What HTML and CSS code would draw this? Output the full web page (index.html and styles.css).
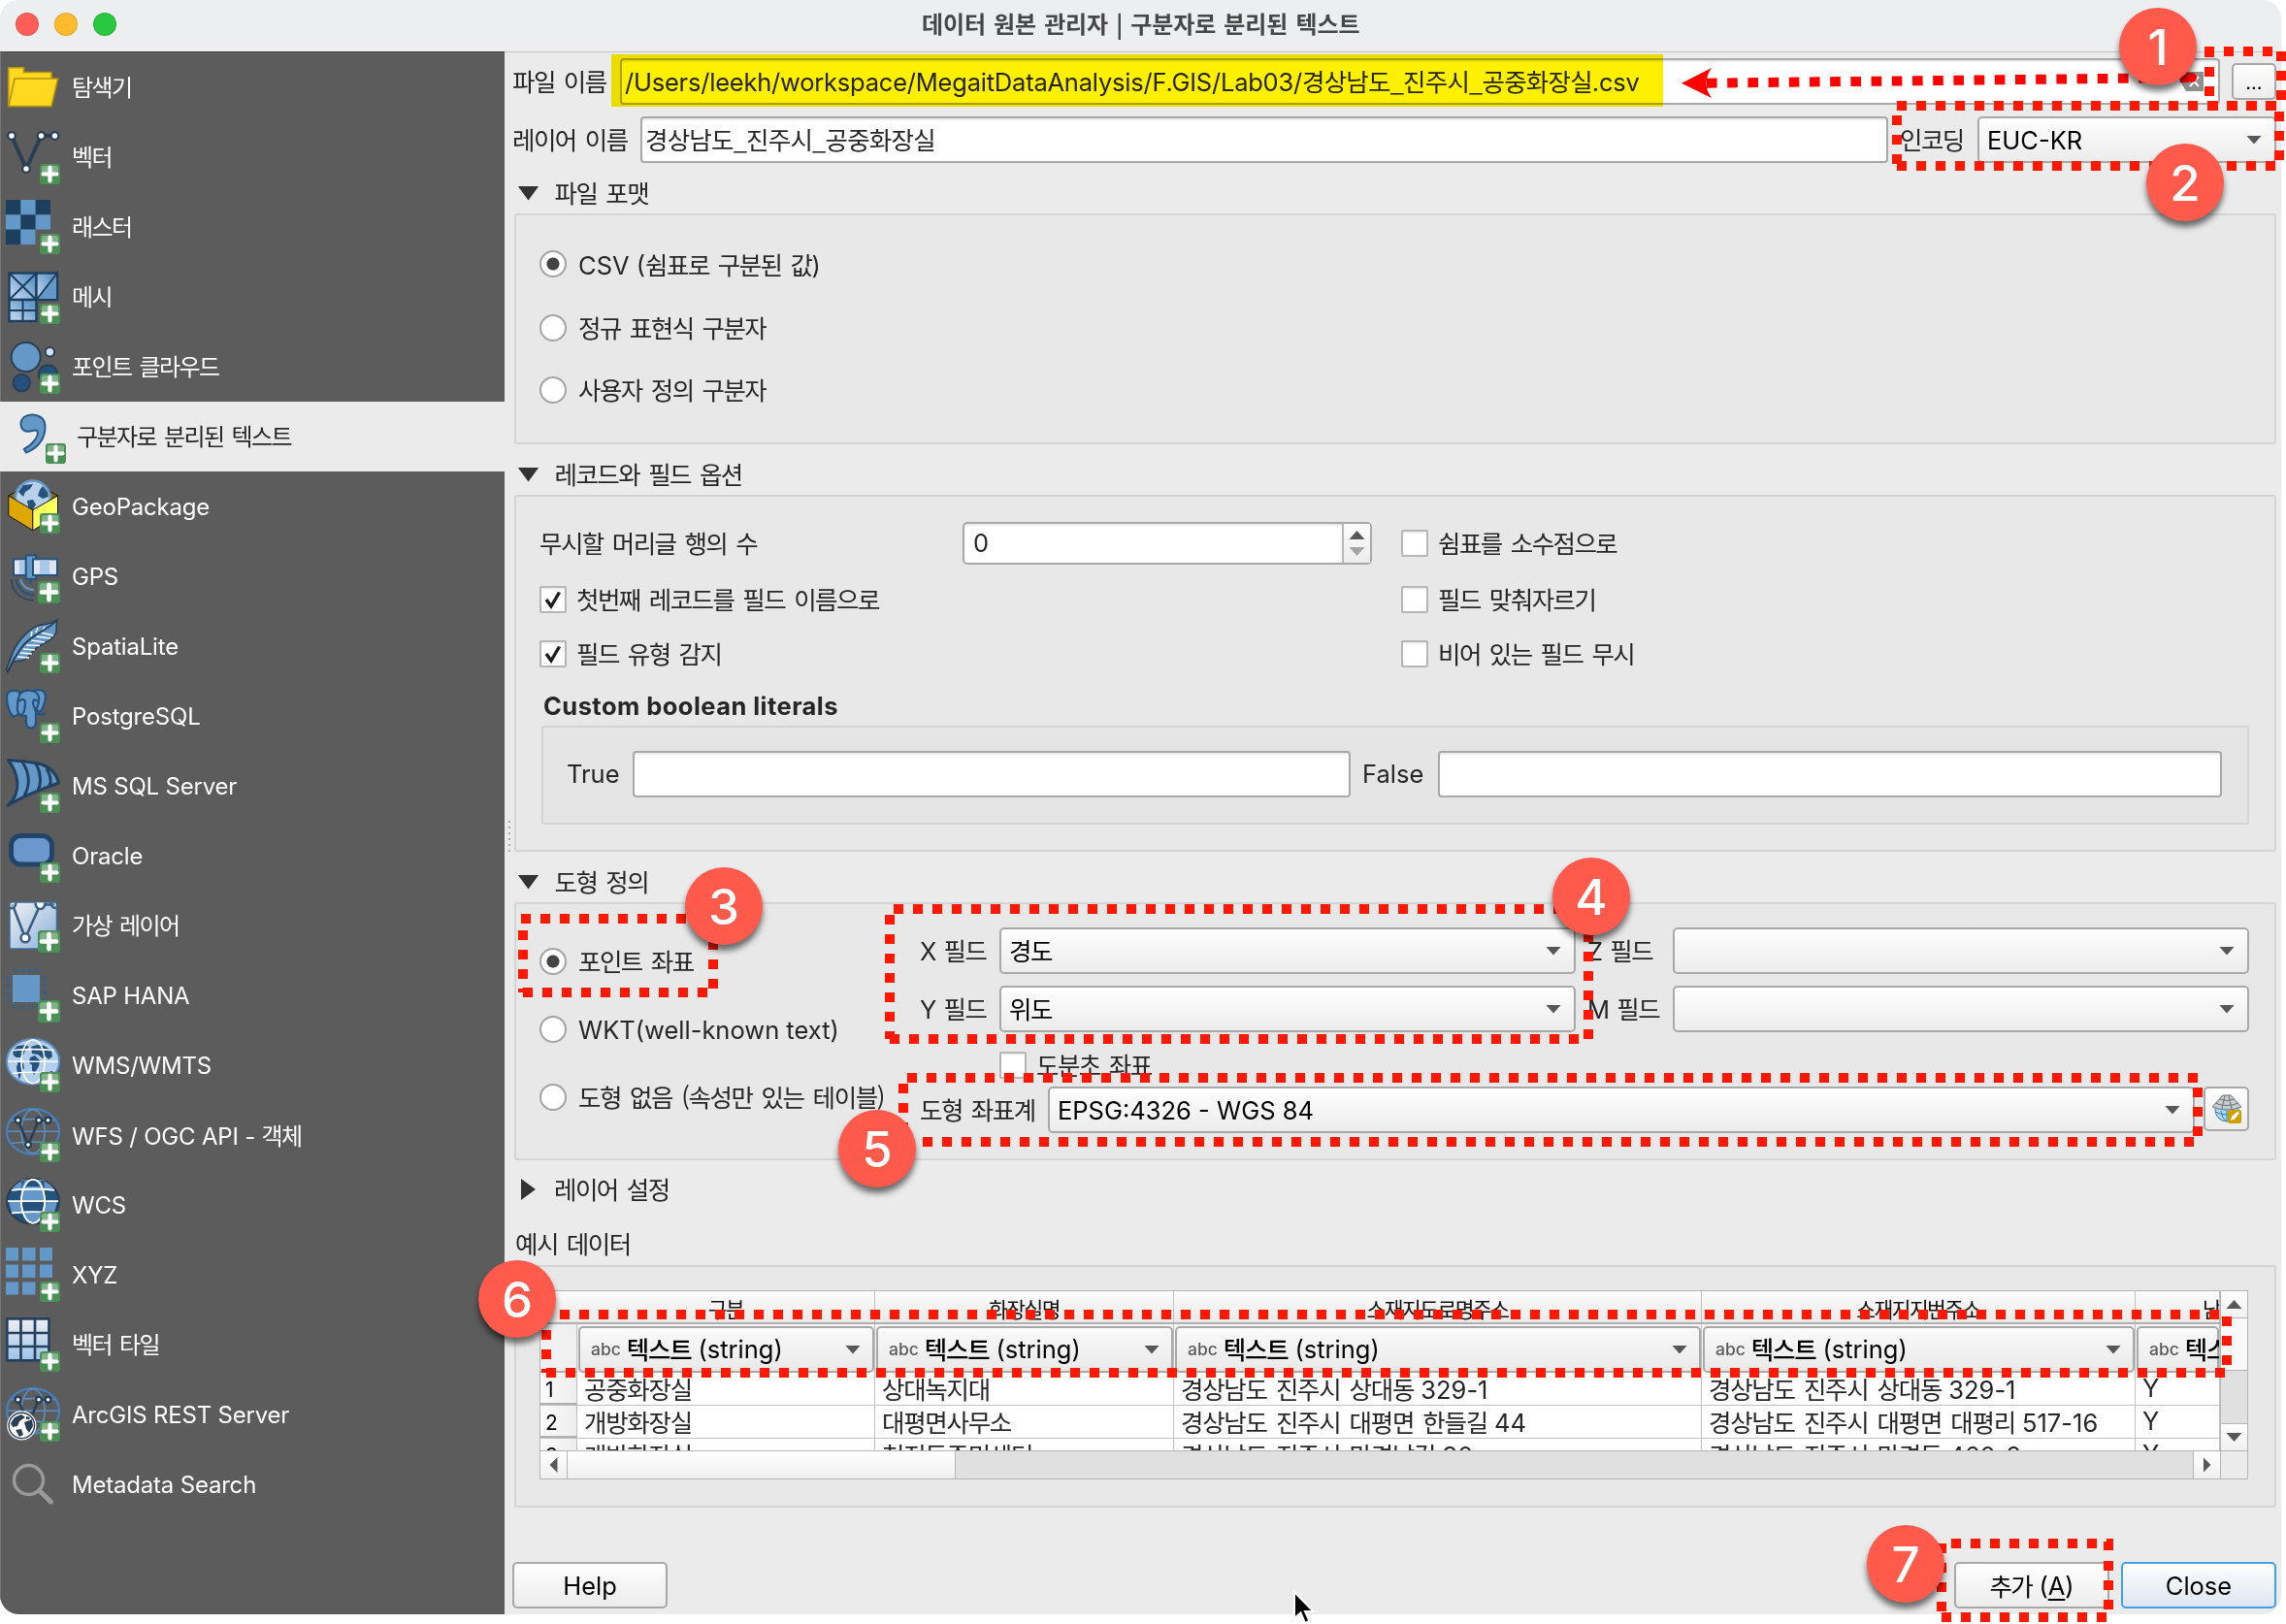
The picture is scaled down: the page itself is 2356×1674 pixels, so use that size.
FILE: index.html
```html
<!DOCTYPE html>
<html lang="ko">
<head>
<meta charset="utf-8">
<title>데이터 원본 관리자</title>
<link rel="stylesheet" href="styles.css">
</head>
<body>
<svg class="defs" width="0" height="0">
  <defs>
    <linearGradient id="pale" x1="0" y1="0" x2="1" y2="1"><stop offset="0" stop-color="#f2f2f4"/><stop offset="1" stop-color="#86aedb"/></linearGradient>
    <linearGradient id="mesh" x1="0" y1="1" x2="1" y2="0"><stop offset="0.2" stop-color="#b4cfeb"/><stop offset="0.8" stop-color="#6398c8"/></linearGradient>
    <linearGradient id="tile" x1="0" y1="0" x2="0" y2="1"><stop offset="0" stop-color="#f0f0f2"/><stop offset="1" stop-color="#9cc2ea"/></linearGradient>
    <symbol id="plus" viewBox="0 0 21 21"><rect width="21" height="21" rx="3" fill="#4a8f55"/><path d="M2 10V4Q2 2 4 2H17Q19 2 19 4V10Z" fill="#83b18b"/><path d="M10.5 3.5V17.5M3.5 10.5H17.5" stroke="#fff" stroke-width="4.2" stroke-linecap="round"/></symbol>
    <symbol id="land" viewBox="0 0 56 49"><path d="M7 13L12 8 20 7 24 9 20 13 18 17 15 20 11 20 8 18ZM13 24L18 26 19 31 16 36 14 43 12 36 11 30ZM26 9L32 7 40 8 47 13 48 19 44 22 41 19 38 21 33 17 27 16ZM25 20L30 18 35 23 34 29 31 34 29 38 27 33 27 28 24 25ZM44 35L48 34 49 37 45 39Z"/></symbol>
    <symbol id="grid" viewBox="0 0 56 49"><g fill="none" stroke-width="1.6"><ellipse cx="28" cy="24.3" rx="12" ry="22.5"/><path d="M2 24.3H54M6 12.8Q28 10.5 50 12.8M6 36.5Q28 34 50 36.5"/></g></symbol>
  </defs>
</svg>

<div class="window">
  <header class="titlebar">
    <div class="lights"><i class="light red"></i><i class="light amber"></i><i class="light green"></i></div>
    <h1 class="title ko">데이터 원본 관리자 | 구분자로 분리된 텍스트</h1>
  </header>

  <div class="body">
    <nav class="sidebar">
      <a class="source"><svg class="icon" viewBox="0 0 56 56"><g fill="#ffd820" stroke="#b5930e" stroke-width="1.6"><path d="M2.7 7.8H18.5V12.5H47V47.5H2.7Z"/><path d="M9 19H53.7L47 47.5H3Z"/></g></svg><span class="ko">탐색기</span></a>
      <a class="source"><svg class="icon" viewBox="0 0 56 56"><path d="M6 6L21 40 36.5 6H50.5" fill="none" stroke="#2a3e54" stroke-width="4"/><g fill="#fff" stroke="#2a3e54" stroke-width="2.2"><circle cx="6" cy="6" r="3.8"/><circle cx="21" cy="40" r="3.8"/><circle cx="36.500" cy="6" r="3.8"/><circle cx="50.500" cy="6" r="3.8"/></g><use href="#plus" x="35" y="35" width="21" height="21"/></svg><span class="ko">벡터</span></a>
      <a class="source"><svg class="icon" viewBox="0 0 56 56"><path d="M0 0H46V30.400H30.500V46H0Z" fill="#6398c8"/><path d="M0 0H15.300V15.200H0ZM30.600 0H46V15.200H30.600ZM15.300 15.200H30.600V30.400H15.300ZM0 30.400H15.300V46H0Z" fill="#1d3f5e"/><use href="#plus" x="35" y="35" width="21" height="21"/></svg><span class="ko">래스터</span></a>
      <a class="source"><svg class="icon" viewBox="0 0 56 56"><g stroke="#1d3f5e" stroke-width="2.4" fill="url(#mesh)"><rect x="3.500" y="3.500" width="28" height="27.500"/><rect x="31.500" y="3.500" width="21.500" height="27.500"/><rect x="3.500" y="31" width="28" height="22"/></g><path d="M32 31L53 4V31Z" fill="#6398c8"/><path d="M3.500 3.500L31.500 31M3.500 31L31.500 3.500M31.500 31L53 3.500V31H31.500M17.500 31V53M3.500 42H31.500" stroke="#1d3f5e" stroke-width="2" fill="none"/><use href="#plus" x="35" y="35" width="21" height="21"/></svg><span class="ko">메시</span></a>
      <a class="source"><svg class="icon" viewBox="0 0 56 56"><g stroke="#2a3e54" stroke-width="2"><circle cx="20.700" cy="18" r="15" fill="#6398c8"/><circle cx="45.400" cy="12.800" r="4.700" fill="#d5e1ee"/><circle cx="16.300" cy="44.600" r="8.700" fill="#24527c"/><circle cx="43.500" cy="36" r="9.700" fill="#24527c"/></g><use href="#plus" x="35" y="35" width="21" height="21"/></svg><span class="ko">포인트 클라우드</span></a>
      <a class="source current"><svg class="icon" viewBox="0 0 56 56"><path d="M22 5.500C15 5 9.500 9 9.500 15C9.500 21 14 23.500 19 22.500C22 22 25.500 20.500 26.500 22.500C28.500 27 22 36 12.800 41L15 44.500C27 40 35 30 34.500 17C34 9 28 6 22 5.500Z" fill="#6398c8" stroke="#2a5b86" stroke-width="2"/><use href="#plus" x="35" y="35" width="21" height="21"/></svg><span class="ko">구분자로 분리된 텍스트</span></a>
      <a class="source"><svg class="icon" viewBox="0 0 56 56"><path d="M2.800 17L27.800 3 53.500 17 27.800 31.700Z" fill="#8a6a10" stroke="#111"/><circle cx="27.800" cy="19.500" r="18" fill="#b9d0ea" stroke="#6398c8" stroke-width="2.500"/><path d="M13 13L18 6 28 5 25 10 20 13 18 18ZM38 7L43 13 44 18 38 20 33 17 35 11ZM22 22L28 21 31 26 27 33 23 28Z" fill="#24527c"/><path d="M2.800 17L27.800 31.700V52.800L2.800 37.400Z" fill="#dfa800" stroke="#111"/><path d="M53.500 17L27.800 31.700V52.800L53.500 37.400Z" fill="#ffff5c" stroke="#111"/><use href="#plus" x="35" y="35" width="21" height="21"/></svg><span>GeoPackage</span></a>
      <a class="source"><svg class="icon" viewBox="0 0 56 56"><g stroke="#24527c" stroke-width="2"><rect x="8" y="10.400" width="13" height="16.500" fill="#dfe5ef"/><path d="M14 11.500H20V26H14Z" fill="#a9c9ea" stroke="none"/><rect x="20.700" y="6.400" width="10.500" height="24.500" fill="#6398c8"/><rect x="28" y="10.400" width="25" height="16.500" fill="#dfe5ef"/><path d="M35 11.400H45V26H35Z" fill="#a9c9ea" stroke="none"/><path d="M25.500 31V36" /></g><g fill="none" stroke-width="2"><path d="M15 31Q18 42 29 42" stroke="#6398c8"/><path d="M10.500 31Q14 47 29 47.500" stroke="#24527c"/><path d="M5.500 31Q8 52 29 53" stroke="#35485c"/></g><use href="#plus" x="33" y="33" width="23" height="23"/></svg><span>GPS</span></a>
      <a class="source"><svg class="icon" viewBox="0 0 56 56"><path d="M52.500 1L52 14C47 24 37 25 33 29C27 33 23 40 19 42C14 44 10 43 7 44L2 55L0.500 52L6 38C9 28 20 12 34 6.500C40 5 47 6 52.500 1Z" fill="#6398c8" stroke="#2a3e54" stroke-width="1.600"/><path d="M36 14L49 17M31 18L46 20M26 22L40 24M21 27L35 27.500M18 31L30 32M15 35L27 36M12 39L24 40M40 8L38 12M33 9L31 14M27 13L26 18" stroke="#fff" stroke-width="1.500"/><path d="M52.500 1C44 12 25 16 15 31Q8 41 2 54" stroke="#2a3e54" stroke-width="2" fill="none"/><use href="#plus" x="35" y="35" width="21" height="21"/></svg><span>SpatiaLite</span></a>
      <a class="source"><svg class="icon" viewBox="0 0 56 56"><g fill="#6398c8" stroke="#24527c" stroke-width="2.200" stroke-linejoin="round"><path d="M14 3C9 1 1 1 1 9C1 16 4 27 8.500 28.500C11 28 14 25 15 22Z"/><path d="M28 2C36 0 41 2 41 8C41 15 37 22 35 24L28 20Z"/><path d="M15 5C20 0 30 1 33 6C37 12 31 20 31 24V35C31 42 21 42 21 35V28C13 28 11 24 12 18Q12 10 15 5Z"/><path d="M31 25Q36 28 41 25" fill="none"/><path d="M13 13Q20 8 20 15Q20 23 17 26M33 13Q28 9 28 15L31 24" fill="none"/></g><use href="#plus" x="35" y="35" width="21" height="21"/></svg><span>PostgreSQL</span></a>
      <a class="source"><svg class="icon" viewBox="0 0 56 56"><path d="M2.500 1.500C18 3 29 3.500 37 6C48 10 53 18 54.500 25C38 31 16 39 2 48.500C18 34 12 14 2.500 1.500Z" fill="#6398c8" stroke="#23415f" stroke-width="3" stroke-linejoin="round"/><path d="M17 3.500C25 15 25 28 19 38M31 5C36 14 37 25 33 33M42 10C46 17 47 24 45 28" fill="none" stroke="#23415f" stroke-width="3"/><use href="#plus" x="35" y="35" width="21" height="21"/></svg><span>MS SQL Server</span></a>
      <a class="source"><svg class="icon" viewBox="0 0 56 56"><rect x="5.500" y="7.500" width="42" height="29.500" rx="10" fill="#6b97cc" stroke="#22446a" stroke-width="5"/><use href="#plus" x="35" y="35" width="21" height="21"/></svg><span>Oracle</span></a>
      <a class="source"><svg class="icon" viewBox="0 0 56 56"><rect x="4" y="4" width="48.500" height="48" rx="2" fill="url(#pale)" stroke="#3e6a94" stroke-width="1.500"/><path d="M6.800 6.500L20 40.800 35.600 6.500H50" fill="none" stroke="#3c5f80" stroke-width="2.600"/><g fill="#fff" stroke="#3c5f80" stroke-width="2.600"><circle cx="20" cy="40.800" r="4.500"/><path d="M4 10Q10 11 10.500 4.500M30.500 4.500Q31 11 35.600 11Q40 11 40.500 4.500M46.500 4.500Q47 10 52 10"/></g><use href="#plus" x="33" y="33" width="23" height="23"/></svg><span class="ko">가상 레이어</span></a>
      <a class="source"><svg class="icon" viewBox="0 0 56 56"><rect x="7" y="7" width="28" height="28" fill="#6398c8"/><g stroke="#3c5f85" stroke-width="4" stroke-dasharray="4 3.800"><path d="M7.200 2H36M7.200 40H36M2 7.500V36M40 7.500V36"/></g><use href="#plus" x="33" y="33" width="23" height="23"/></svg><span>SAP HANA</span></a>
      <a class="source"><svg class="icon" viewBox="0 0 56 56"><ellipse cx="28" cy="24.300" rx="27" ry="23.300" fill="#b4cfeb" stroke="#5b92cb" stroke-width="2"/><use href="#land" width="56" height="49" fill="#24527c"/><use href="#grid" width="56" height="49" stroke="#fff"/><use href="#plus" x="35" y="35" width="21" height="21"/></svg><span>WMS/WMTS</span></a>
      <a class="source"><svg class="icon" viewBox="0 0 56 56"><ellipse cx="28" cy="24.300" rx="27" ry="23.300" fill="none" stroke="#4383c4" stroke-width="2.200"/><use href="#grid" width="56" height="49" stroke="#5b8fc4"/><path d="M12.600 12.800L23 38 34 12.800H43.500" fill="none" stroke="#2a3e54" stroke-width="2.600"/><g fill="#fff" stroke="#2a3e54" stroke-width="2.400"><circle cx="12.600" cy="12.800" r="3"/><circle cx="23" cy="38" r="3"/><circle cx="34" cy="12.800" r="3"/><circle cx="43.500" cy="12.800" r="3"/></g><use href="#plus" x="35" y="35" width="21" height="21"/></svg><span>WFS / OGC API - <span class="ko">객체</span></span></a>
      <a class="source"><svg class="icon" viewBox="0 0 56 56"><ellipse cx="28" cy="24.300" rx="26.800" ry="23" fill="#24527c" stroke="#2a3e54" stroke-width="2.400"/><path d="M6 12.500Q10 5 20 2.500Q17 7 16.500 12ZM16.500 12.500H39.500V2H16.500ZM3 24.500H16V36H6ZM40 24.500H53L50 36H40ZM36 2.500Q46 5 50 12.500H39Z" fill="#6398c8"/><ellipse cx="28" cy="24.300" rx="12" ry="22" fill="#6398c8"/><path d="M19 9H37Q33 2 28 2Q22 2 19 9ZM16.500 25H39.500L38 36H18Z" fill="#24527c"/><use href="#grid" width="56" height="49" stroke="#fff"/><use href="#grid" width="56" height="49" stroke="#fff"/><use href="#plus" x="35" y="35" width="21" height="21"/></svg><span>WCS</span></a>
      <a class="source"><svg class="icon" viewBox="0 0 56 56"><path d="M0 0H13V13.400H0ZM17 0H30.500V13.400H17ZM35 0H48V13.400H35ZM0 17.500H13V31H0ZM17 17.500H30.500V31H17ZM35 17.500H48V31H35ZM0 35.500H13V48.500H0ZM17 35.500H30.500V48.500H17Z" fill="#6398c8"/><use href="#plus" x="35" y="35" width="21" height="21"/></svg><span>XYZ</span></a>
      <a class="source"><svg class="icon" viewBox="0 0 56 56"><rect x="1.200" y="1.200" width="43.500" height="43.500" fill="url(#tile)"/><path d="M1.300 0V45.500M15.500 0V45.500M30 0V45.500M44.500 0V45.500M0 1.300H45.700M0 16H45.700M0 30H45.700M0 44.300H45.700" stroke="#26415e" stroke-width="2.700"/><use href="#plus" x="35" y="35" width="21" height="21"/></svg><span class="ko">벡터 타일</span></a>
      <a class="source"><svg class="icon" viewBox="0 0 56 56"><ellipse cx="28" cy="24.300" rx="27" ry="23.300" fill="none" stroke="#4383c4" stroke-width="2.200"/><use href="#grid" width="56" height="49" stroke="#5b8fc4"/><path d="M12.600 12.800L23 38 34 12.800H43.500" fill="none" stroke="#2a3e54" stroke-width="2.600"/><g fill="#fff" stroke="#2a3e54" stroke-width="2.400"><circle cx="12.600" cy="12.800" r="3"/><circle cx="34" cy="12.800" r="3"/><circle cx="43.500" cy="12.800" r="3"/></g><circle cx="16.300" cy="39.400" r="14.500" fill="#2a3e54" stroke="#fff" stroke-width="1.200"/><circle cx="16.300" cy="39.400" r="12.500" fill="#fff"/><path d="M5 37L9 31 16 28 20 31 14 35 12 40 7 41ZM19 36L27 33 28 40 24 47 21 43ZM10 44L16 43 18 49 14 51ZM21 30L25 31 24 33 21 33Z" fill="#2a3e54"/><use href="#plus" x="35" y="35" width="21" height="21"/></svg><span>ArcGIS REST Server</span></a>
      <a class="source"><svg class="icon" viewBox="0 0 56 56"><g fill="none" stroke="#9a9a9a"><circle cx="23.500" cy="23.500" r="15" stroke-width="3.500"/><path d="M34.500 34.500L46.500 46" stroke-width="5" stroke-linecap="round"/></g></svg><span>Metadata Search</span></a>
    </nav>

    <div class="splitter"></div>

    <main class="main">
      <div class="row file-row">
        <label class="ko w-file">파일 이름</label>
        <div class="input file-input"><span class="path">/Users/leekh/workspace/MegaitDataAnalysis/F.GIS/Lab03/<span class="ko name">경상남도_진주시_공중화장실</span>.csv</span>
          <svg class="clear" viewBox="0 0 24 20"><path d="M0 10L6 0H24V20H6Z" fill="#8e8e8e"/><path d="M10 5L19 15M19 5L10 15" stroke="#fff" stroke-width="2"/></svg>
        </div>
        <button class="btn browse">...</button>
      </div>
      <div class="row layer-row">
        <label class="ko w-layer">레이어 이름</label>
        <div class="input layer-input ko name">경상남도_진주시_공중화장실</div>
        <label class="ko w-enc">인코딩</label>
        <div class="combo enc-combo"><span class="lat">EUC-KR</span><i class="tri"></i></div>
      </div>

      <h2 class="section first ko"><i class="fold"></i>파일 포맷</h2>
      <section class="panel formats">
        <label class="option"><i class="radio on"></i><span class="lat">CSV (<span class="ko">쉼표로 구분된 값</span>)</span></label>
        <label class="option"><i class="radio"></i><span class="ko">정규 표현식 구분자</span></label>
        <label class="option last"><i class="radio"></i><span class="ko">사용자 정의 구분자</span></label>
      </section>

      <h2 class="section ko"><i class="fold"></i>레코드와 필드 옵션</h2>
      <section class="panel records">
        <div class="record-grid">
          <div class="skip"><span class="ko skip-label">무시할 머리글 행의 수</span>
            <div class="spin"><span>0</span><div class="spin-buttons"><i class="tri up"></i><i class="tri faded"></i></div></div></div>
          <label class="check-row"><i class="check"></i><span class="ko">쉼표를 소수점으로</span></label>
          <label class="check-row"><i class="check on"><svg viewBox="0 0 28 28"><path d="M7 14L12 21 20.500 6.500"/></svg></i><span class="ko">첫번째 레코드를 필드 이름으로</span></label>
          <label class="check-row"><i class="check"></i><span class="ko">필드 맞춰자르기</span></label>
          <label class="check-row"><i class="check on"><svg viewBox="0 0 28 28"><path d="M7 14L12 21 20.500 6.500"/></svg></i><span class="ko">필드 유형 감지</span></label>
          <label class="check-row"><i class="check"></i><span class="ko">비어 있는 필드 무시</span></label>
        </div>
        <h3 class="literals-title">Custom boolean literals</h3>
        <div class="panel literals">
          <label class="w-true">True</label><div class="input true-input"></div>
          <label class="w-false">False</label><div class="input false-input"></div>
        </div>
      </section>

      <h2 class="section ko"><i class="fold"></i>도형 정의</h2>
      <section class="panel geometry">
        <div class="geom-kinds">
          <label class="option"><i class="radio on"></i><span class="ko">포인트 좌표</span></label>
          <label class="option"><i class="radio"></i><span class="lat">WKT(well-known text)</span></label>
          <label class="option"><i class="radio"></i><span class="ko no-geom">도형 없음 (속성만 있는 테이블)</span></label>
        </div>
        <div class="geom-fields">
          <div class="field-row"><label class="w-x">X <span class="ko">필드</span></label><div class="combo x-combo"><span class="ko">경도</span><i class="tri"></i></div><label class="w-z">Z <span class="ko">필드</span></label><div class="combo z-combo"><i class="tri"></i></div></div>
          <div class="field-row"><label class="w-x">Y <span class="ko">필드</span></label><div class="combo x-combo"><span class="ko">위도</span><i class="tri"></i></div><label class="w-z">M <span class="ko">필드</span></label><div class="combo z-combo"><i class="tri"></i></div></div>
          <label class="check-row dms"><i class="check"></i><span class="ko">도분초 좌표</span></label>
          <div class="field-row crs"><label class="ko w-crs">도형 좌표계</label><div class="combo crs-combo"><span class="lat">EPSG:4326 - WGS 84</span><i class="tri"></i></div>
            <button class="btn crs-btn"><svg viewBox="0 0 32 32"><circle cx="16" cy="17" r="12" fill="#a8d8f4" stroke="#3c7fb0"/><path d="M16 17V29M4 19Q16 25 28 19M10 18Q11 25 15 29M22 18Q21 25 17 29" fill="none" stroke="#3c7fb0"/><path d="M12 2H20L31 14Q16 20 1 14Z" fill="#c4ccd2" stroke="#6c747a"/><path d="M14 2L11 16M18 2L21 16M8 6Q16 9 24 6M4 10Q16 15 28 10" fill="none" stroke="#6c747a"/><rect x="17" y="17" width="14" height="14" rx="2.500" fill="#cda000"/><path d="M20 28L21 24 27 18.500 29 20.500 23.500 27Z" fill="#fff"/></svg></button></div>
        </div>
      </section>

      <h2 class="section collapsed ko"><i class="fold closed"></i>레이어 설정</h2>
      <div class="sample-title ko">예시 데이터</div>
      <section class="panel sample">
        <div class="table-frame">
          <div class="viewport">
            <div class="tr head ko"><span class="corner"></span><span class="c1">구분</span><span class="c2">화장실명</span><span class="c3">소재지도로명주소</span><span class="c4">소재지지번주소</span><span class="c5">남</span></div>
            <div class="tr types"><span class="corner"></span>
              <span class="c1"><b class="type"><em>abc</em><span class="ko">텍스트</span> (string)<i class="tri"></i></b></span>
              <span class="c2"><b class="type"><em>abc</em><span class="ko">텍스트</span> (string)<i class="tri"></i></b></span>
              <span class="c3"><b class="type"><em>abc</em><span class="ko">텍스트</span> (string)<i class="tri"></i></b></span>
              <span class="c4"><b class="type"><em>abc</em><span class="ko">텍스트</span> (string)<i class="tri"></i></b></span>
              <span class="c5"><b class="type"><em>abc</em><span class="ko">텍스트</span></b></span></div>
            <div class="tr data"><span class="corner">1</span><span class="c1 ko">공중화장실</span><span class="c2 ko">상대녹지대</span><span class="c3"><span class="ko">경상남도 진주시 상대동</span> 329-1</span><span class="c4"><span class="ko">경상남도 진주시 상대동</span> 329-1</span><span class="c5">Y</span></div>
            <div class="tr data"><span class="corner">2</span><span class="c1 ko">개방화장실</span><span class="c2 ko">대평면사무소</span><span class="c3"><span class="ko">경상남도 진주시 대평면 한들길</span> 44</span><span class="c4"><span class="ko">경상남도 진주시 대평면 대평리</span> 517-16</span><span class="c5">Y</span></div>
            <div class="tr data"><span class="corner">3</span><span class="c1 ko">개방화장실</span><span class="c2 ko">천전동주민센터</span><span class="c3"><span class="ko">경상남도 진주시 망경남길</span> 30</span><span class="c4"><span class="ko">경상남도 진주시 망경동</span> 460-2</span><span class="c5">Y</span></div>
          </div>
          <div class="vscroll"><i class="sb"><i class="tri up"></i></i><i class="thumb"></i><i class="trough"></i><i class="sb"><i class="tri"></i></i></div>
          <div class="hscroll"><i class="sb"><i class="tri left"></i></i><i class="thumb"></i><i class="trough"></i><i class="sb"><i class="tri right"></i></i></div>
          <div class="scroll-corner"></div>
        </div>
      </section>

      <footer class="actions">
        <button class="btn help">Help</button>
        <button class="btn add"><span class="ko">추가</span> (<u>A</u>)</button>
        <button class="btn close">Close</button>
      </footer>
    </main>
  </div>
</div>

<div class="highlight"></div>
<svg class="marks" viewBox="0 0 2356 1674">
  <g class="dash">
    <path d="M2272 53H2345M2277 59V58M2351 53V109M2276 109H2348"/>
    <path d="M2277 49V59M2277 69V104"/>
    <path d="M1955 109H2350M1955 119V171M1955 171H2350M2349 115V166"/>
    <path d="M537 947H720M539 959V1023M539 1023H735M735 969V1021"/>
    <path d="M921 937H1610M917 943V1071M917 1071H1630M1637 961V1072"/>
    <path d="M935 1111H2266M931 1117V1170M951 1177H2262M2265 1121V1172"/>
    <path d="M577 1355H2288M563 1371V1415M563 1415H2294M2295 1357V1408"/>
    <path d="M2011 1591H2178M2001 1591V1667M2001 1667H2173M2173 1589V1598M2173 1609V1661"/>
  </g>
  <path class="pointer-line" d="M1759 85.700L2256 80"/>
  <circle cx="2259" cy="80" r="5" fill="#f00"/>
  <path d="M1733 85.700L1764 70Q1753 86 1764 101Z" fill="#f00"/>
  <path d="M1334 1641V1668L1340.500 1662.500 1345 1673 1349.500 1671 1345 1661H1353.500Z" fill="#000" stroke="#fff" stroke-width="2"/>
</svg>
<b class="step s1">1</b><b class="step s2">2</b><b class="step s3">3</b><b class="step s4">4</b><b class="step s5">5</b><b class="step s6">6</b><b class="step s7">7</b>
</body>
</html>
```
FILE: styles.css
```css
* { box-sizing: border-box; margin: 0; padding: 0; }
body {
  position: relative;
  width: 2356px;
  height: 1674px;
  overflow: hidden;
  background: #fff;
  font-family: Inter, "Noto Sans CJK KR", sans-serif;
  font-size: 25.5px;
  line-height: 32px;
  color: #262626;
  white-space: nowrap;
}
i, em { font-style: normal; display: block; }
h1, h2, h3, b { font-weight: 400; }
button { font: inherit; color: #000; }
.defs { position: absolute; }
.ko { font-family: "Noto Sans CJK KR", Inter, sans-serif; letter-spacing: -1.55px; word-spacing: 3.4px; padding-bottom: 3px; }
.lat { padding-top: 2px; }
.name, .input.name { letter-spacing: -.8px; }

.window { width: 2351px; height: 1664px; display: flex; flex-direction: column; background: #ebebeb; border-radius: 20px; overflow: hidden; }
.titlebar { height: 54px; flex: none; background: #edeef0; border-bottom: 1px solid #c6c6c8; display: flex; align-items: center; padding-left: 16px; padding-bottom: 3px; }
.lights { display: flex; gap: 16px; width: 934px; }
.light { width: 24px; height: 24px; border-radius: 50%; border: 1px solid rgba(0,0,0,.12); }
.red { background: #ff5f57; }
.amber { background: #febb2e; }
.green { background: #28c840; }
.title { font-size: 24px; font-weight: 700; color: #464646; letter-spacing: -.1px; word-spacing: 1.5px; }

.body { flex: 1; display: flex; min-height: 0; }
.sidebar { width: 520px; background: #5c5c5c; color: #fff; font-size: 24px; letter-spacing: -.2px; border-left: 1px solid #777; border-top: 1px solid #3f3f3f; margin-top: -1px; }
.sidebar .ko { letter-spacing: -1.6px; word-spacing: 3px; }
.source { display: flex; align-items: center; height: 72px; padding-left: 5px; gap: 12px; }
.source > span:not(.ko) { padding-top: 2px; }
.icon { width: 56px; height: 56px; flex: none; overflow: visible; }
.current { background: #ebebeb; color: #262626; padding-left: 12px; gap: 11px; margin-left: -1px; }
.splitter { width: 8px; background: repeating-linear-gradient(#aaa 0 2px, transparent 2px 6px) 4px 792px / 2px 32px no-repeat; }

.main { flex: 1; padding-right: 5px; display: flex; flex-direction: column; min-width: 0; }
.row { height: 60px; display: flex; align-items: center; flex: none; }
.input { height: 48px; background: #fff; border: 2px solid #a8a8a8; border-radius: 4px; box-shadow: inset 0 2px #ececec; flex: none; display: flex; align-items: center; padding-left: 3px; }
.combo, .btn { height: 48px; border: 2px solid #a8a8a8; border-radius: 5px; background: linear-gradient(#fefefe, #ececec); color: #000; flex: none; display: flex; align-items: center; }
.combo { justify-content: space-between; padding: 0 13px 0 8px; }
.btn { justify-content: center; padding-top: 2px; }
.tri { width: 16px; height: 9px; background: #575757; clip-path: polygon(0 0, 100% 0, 50% 100%); flex: none; margin-left: auto; }
.tri.up { clip-path: polygon(50% 0, 100% 100%, 0 100%); }
.tri.left { width: 8px; height: 16px; clip-path: polygon(100% 0, 100% 100%, 0 50%); }
.tri.right { width: 8px; height: 16px; clip-path: polygon(0 0, 100% 50%, 0 100%); }
.tri.faded { background: #a6a6a6; }

.w-file { width: 111px; }
.file-input { width: 1649px; justify-content: space-between; padding-right: 15px; }
.path { letter-spacing: -.22px; }
.clear { width: 24px; height: 20px; }
.browse { width: 46px; height: 38px; margin-left: 12px; font-size: 20px; }
.w-layer { width: 132px; }
.layer-input { width: 1286px; }
.w-enc { width: 80px; margin-left: 12px; }
.enc-combo { width: 308px; }

.section { height: 52px; padding: 7px 0 0; display: flex; align-items: center; font-size: 25.500px; flex: none; }
.section.first { height: 46px; padding-top: 1px; }
.section.collapsed { height: 60px; padding: 0 0 3px; }
.fold { width: 22px; height: 15px; margin: 3px 16px 0 5.500px; background: #333; clip-path: polygon(0 0, 100% 0, 50% 100%); }
.fold.closed { width: 15px; height: 22px; margin: 3px 19px 0 9px; clip-path: polygon(0 0, 100% 50%, 0 100%); }
.panel { border: 2px solid #d4d4d4; border-radius: 3px; background: #e8e8e8; margin-left: 2px; flex: none; }
.option { height: 66px; display: flex; align-items: center; gap: 12px; }
.radio { width: 28px; height: 28px; border-radius: 50%; border: 2px solid #a4a4a4; background: #fff; }
.radio.on { background: radial-gradient(circle, #444 6px, #fff 7px); }
.formats { height: 238px; padding: 17px 0 0 24px; }
.option.last { height: 62px; }

.records { height: 368px; padding: 19px 0 0 24px; }
.record-grid { display: grid; grid-template-columns: 888px 1fr; grid-template-rows: 58px 58px 54px; align-items: center; }
.skip { display: flex; align-items: center; }
.skip-label { width: 436px; }
.spin { width: 422px; height: 44px; background: #fff; border: 2px solid #a8a8a8; border-radius: 5px; display: flex; justify-content: space-between; align-items: center; padding-left: 9px; box-shadow: inset 0 2px #ececec; }
.spin-buttons { width: 29px; height: 100%; border-left: 2px solid #b8b8b8; background: linear-gradient(#fdfdfd, #ececec); display: flex; flex-direction: column; justify-content: center; align-items: center; gap: 8px; }
.spin-buttons .tri { margin: 0; }
.check-row { display: flex; align-items: center; gap: 10px; }
.check { width: 28px; height: 28px; border: 2px solid #b6b6b6; background: #fff; border-radius: 2px; box-shadow: inset 0 2px #f0f0f0; }
.check svg { width: 28px; height: 28px; margin: -2px; display: block; fill: none; stroke: #1c1c1c; stroke-width: 3.400; }
.literals-title { height: 47px; padding: 11px 0 0 4px; font-size: 25.5px; letter-spacing: .45px; font-weight: 700; }
.literals { width: 1760px; height: 102px; background: #e5e5e5; display: flex; align-items: center; padding: 0 0 2px 24px; }
.w-true { width: 68px; }
.true-input { width: 740px; }
.w-false { width: 78px; margin-left: 12px; }
.false-input { width: 808px; }

.geometry { height: 266px; display: flex; padding: 24px 0 0 24px; }
.geom-kinds { width: 392px; }
.geom-kinds .option { height: 70px; }
.no-geom { letter-spacing: -1.45px; }
.field-row { display: flex; align-items: center; height: 48px; margin-bottom: 12px; }
.w-x { width: 82px; }
.x-combo { width: 594px; }
.w-z { width: 88px; margin-left: 12px; }
.z-combo { width: 594px; }
.dms { margin: 20px 0 8px 82px; height: 28px; }
.w-crs { width: 132px; }
.crs-combo { width: 1182px; }
.crs-btn { width: 47px; height: 46px; margin: 0 0 2px 9px; padding: 0; }
.crs-btn svg { width: 32px; height: 32px; flex: none; }

.sample-title { height: 48px; padding: 9px 0 0 3px; flex: none; }
.sample { height: 250px; padding: 24px 0 0 24px; }
.table-frame { width: 1761px; height: 195px; border: 1px solid #b4b4b4; display: grid; grid-template: 165px 28px / 1731px 28px; background: #fff; }
.viewport { overflow: hidden; border-bottom: 1px solid #b4b4b4; }
.tr { display: flex; width: 1731px; overflow: hidden; height: 34px; padding: 0; }
.tr > span { flex: none; border-right: 1px solid #c0c0c0; display: block; overflow: hidden; }
.tr .corner { width: 38px; }
.c1 { width: 307px; }
.c2 { width: 308px; }
.c3 { width: 544px; }
.c4 { width: 447px; }
.c5 { width: 87px; }
.head { font-size: 21.500px; color: #111; background: linear-gradient(#fcfcfc, #eaeaea); border-bottom: 2px solid #b0b0b0; text-align: center; line-height: 35px; }
.head .corner { border-right: 0; }
.head .c5 { text-align: left; padding-left: 69px; }
.types { height: 50px; background: #f4f4f4; }
.types .corner { border-bottom: 2px solid #b0b0b0; background: #f0f0f0; }
.types > span { padding: 2px 0 0 1px; }
.type { height: 48px; border: 2px solid #a8a8a8; border-radius: 5px; background: linear-gradient(#fafafa, #e9e9e9); color: #000; display: flex; align-items: center; padding: 0 12px 0 11px; white-space: pre; }
.type em { font-size: 17.500px; font-weight: 500; color: #5a5a5a; margin-right: 6px; }
.type .ko { font-weight: 500; letter-spacing: -1.3px; }
.data { border-bottom: 1px solid #c0c0c0; line-height: 32px; }
.data > span { padding-left: 7px; }
.data .ko { letter-spacing: -1.3px; }
.data .corner { padding-left: 5px; font-size: 21px; line-height: 36px; color: #000; background: linear-gradient(90deg, #fbfbfb, #eee); border-bottom: 2px solid #b0b0b0; }
.sb { background: linear-gradient(#fff, #f0f0f0); display: flex; align-items: center; justify-content: center; flex: none; }
.sb .tri { margin: 0; }
.vscroll { border-left: 1px solid #b4b4b4; display: flex; flex-direction: column; border-bottom: 1px solid #b4b4b4; background: #e0e0e0; }
.vscroll .sb { height: 27px; }
.vscroll .thumb { height: 55px; border: solid #b4b4b4; border-width: 1px 0; background: #f8f8f8; }
.vscroll .trough { flex: 1; border-bottom: 1px solid #b4b4b4; }
.hscroll { display: flex; background: #e0e0e0; }
.hscroll .sb { width: 27px; }
.hscroll .thumb { width: 401px; border: solid #b4b4b4; border-width: 0 1px; background: linear-gradient(#fff, #efefef); }
.hscroll .trough { flex: 1; border-right: 1px solid #b4b4b4; }
.scroll-corner { background: #ebebeb; border-left: 1px solid #b4b4b4; }

.actions { display: flex; margin-top: 56px; }
.help { width: 160px; }
.add { width: 160px; margin-left: 1326px; white-space: pre; }
.add u { text-underline-offset: 4px; text-decoration-thickness: 2px; }
.close { width: 160px; margin-left: 12px; border-color: #439fe8; background: linear-gradient(#fcfdfe, #dde6f0); }

.highlight { position: absolute; left: 630px; top: 56px; width: 1084px; height: 54px; background: #fff000; mix-blend-mode: multiply; }
.marks { position: absolute; left: 0; top: 0; width: 2356px; height: 1674px; }
.dash { fill: none; stroke: #ff1800; stroke-width: 10; stroke-dasharray: 10; }
.pointer-line { fill: none; stroke: #f00; stroke-width: 10; stroke-dasharray: 10.600; }
.step { position: absolute; width: 80px; height: 80px; border-radius: 50%; background: #ff5a4b; color: #fff; font-size: 51px; line-height: 81px; font-weight: 500; text-align: center; box-shadow: 0 6px 6px rgba(0,0,0,.55); }
.s1 { left: 2184px; top: 8px; }
.s2 { left: 2212px; top: 148px; }
.s3 { left: 706px; top: 894px; }
.s4 { left: 1600px; top: 884px; }
.s5 { left: 864px; top: 1144px; }
.s6 { left: 493px; top: 1299px; }
.s7 { left: 1924px; top: 1572px; }
```
